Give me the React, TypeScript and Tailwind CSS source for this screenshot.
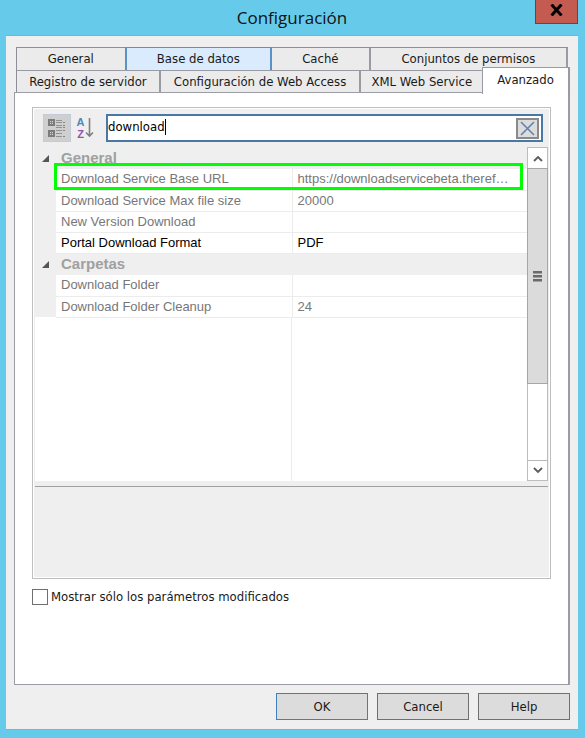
import { useState } from "react";

type Row = { name: string; value: string; editable?: boolean };
type Category = { title: string; rows: Row[] };

const categories: Category[] = [
  {
    title: "General",
    rows: [
      {
        name: "Download Service Base URL",
        value: "https://downloadservicebeta.theref…",
      },
      { name: "Download Service Max file size", value: "20000" },
      { name: "New Version Download", value: "" },
      { name: "Portal Download Format", value: "PDF", editable: true },
    ],
  },
  {
    title: "Carpetas",
    rows: [
      { name: "Download Folder", value: "" },
      { name: "Download Folder Cleanup", value: "24" },
    ],
  },
];

const tabClass =
  "h-full whitespace-nowrap border-r-2 border-[#9a9aa2] bg-[#ebebeb] text-center";

function Tabs() {
  return (
    <div
      role="tablist"
      className="ml-[2px] text-[13px] leading-5 text-[#1a1a1a]"
    >
      <div className="mr-[2px] grid h-[23px] grid-cols-[110fr_146fr_99fr_198fr] border-l border-t border-[#8e8e98]">
        <button role="tab" className={tabClass}>
          General
        </button>
        <button
          role="tab"
          className="-ml-[2px] -mt-px whitespace-nowrap border-x-2 border-t border-[#5a92c4] bg-[#d9ebfd] text-center"
        >
          Base de datos
        </button>
        <button role="tab" className={tabClass}>
          Caché
        </button>
        <button role="tab" className={tabClass}>
          Conjuntos de permisos
        </button>
      </div>
      <div className="grid h-[22px] grid-cols-[144fr_201fr_123fr_86fr] border-l border-[#8e8e98]">
        <button role="tab" className={`${tabClass} border-t`}>
          Registro de servidor
        </button>
        <button role="tab" className={`${tabClass} border-t`}>
          Configuración de Web Access
        </button>
        <button role="tab" className={`${tabClass} border-t`}>
          XML Web Service
        </button>
        <button
          role="tab"
          aria-selected="true"
          className="relative z-10 -mb-[2px] -ml-[2px] -mt-[3px] border-l border-r-2 border-t border-[#9a9aa2] bg-white pb-[2px] text-center"
        >
          Avanzado
        </button>
      </div>
    </div>
  );
}

function CategorizedIcon() {
  return (
    <svg width="18" height="19" viewBox="0 0 18 19" fill="none">
      <path d="M1 1h5v5H1zM1 12h5v5H1z" stroke="#7c7c7c" strokeWidth="2" />
      <path d="M2 3.5h3M3.5 2v3M2 14.5h3M3.5 13v3" stroke="#8a8a8a" />
      <path
        d="M8 1.5h6M8 3.5h6M8 6.5h6M8 8.5h6M8 11.5h6M8 14.5h6M8 17.5h6"
        stroke="#929292"
      />
      <path
        d="M15 3.5h2M15 6.5h2M15 8.5h2M15 11.5h2M15 17.5h2"
        stroke="#858585"
      />
    </svg>
  );
}

function SortIcon() {
  return (
    <span className="flex items-center">
      <span className="flex w-[9px] flex-col items-center font-['Liberation_Sans',sans-serif] text-[11px] font-bold leading-[12px]">
        <span className="text-[#4f86bd]">A</span>
        <span className="text-[#9450b0]">Z</span>
      </span>
      <svg width="9" height="20" viewBox="0 0 9 20" fill="none">
        <path
          d="M4.5 0v18M1 14.5L4.5 18 8 14.5"
          stroke="#808080"
          strokeWidth="1.6"
        />
      </svg>
    </span>
  );
}

function Toolbar() {
  const [query, setQuery] = useState("download");
  return (
    <div className="flex h-[38px] items-center pl-2 pr-[5px]">
      <button
        aria-label="Por categorías"
        className="flex h-7 w-7 shrink-0 items-center justify-center border border-[#c2cbd8] bg-[#cfcfcf]"
      >
        <CategorizedIcon />
      </button>
      <button
        aria-label="Alfabético"
        className="flex h-7 w-7 shrink-0 items-center justify-center"
      >
        <SortIcon />
      </button>
      <div className="ml-[7px] flex h-7 min-w-0 flex-1 items-center border-2 border-[#4a78a6] bg-white pr-[2px]">
        <div className="flex items-center pb-[2px]">
          <input
            aria-label="Buscar"
            value={query}
            onChange={(e) => setQuery(e.target.value)}
            className="field-sizing-content h-5 text-[13px] leading-5 text-black caret-transparent outline-none"
          />
          <span className="h-4 w-px bg-black" />
        </div>
        <button
          aria-label="Borrar"
          onClick={() => setQuery("")}
          className="ml-auto flex h-[21px] w-[23px] items-center justify-center border-2 border-[#8a8a8a] bg-[#dcdcdc]"
        >
          <svg width="15" height="15" viewBox="0 0 15 15" fill="none">
            <path
              d="M1 1l13 13M14 1L1 14"
              stroke="#6583ab"
              strokeWidth="1.6"
            />
          </svg>
        </button>
      </div>
    </div>
  );
}

function Scrollbar() {
  return (
    <div className="flex w-[21px] shrink-0 flex-col border border-[#bcbcbc] bg-white">
      <div className="flex h-5 items-center justify-center">
        <svg width="10" height="7" viewBox="0 0 10 7" fill="none">
          <path d="M1 6l4-4 4 4" stroke="#5c5c5c" strokeWidth="1.8" />
        </svg>
      </div>
      <div className="-mx-px flex h-[216px] items-center justify-center border border-[#a6a6a6] bg-[#dbdbdb]">
        <svg width="9" height="11" viewBox="0 0 9 11">
          <path d="M0 0h9v2.5H0zM0 4h9v2.5H0zM0 8h9v2.5H0z" fill="#6a6a6a" />
        </svg>
      </div>
      <div className="flex-1" />
      <div className="flex h-5 items-center justify-center border-t border-[#b8b8b8]">
        <svg width="10" height="7" viewBox="0 0 10 7" fill="none">
          <path d="M1 1l4 4 4-4" stroke="#5c5c5c" strokeWidth="1.8" />
        </svg>
      </div>
    </div>
  );
}

function PropertyTable() {
  return (
    <div className="relative flex h-[334px]">
      <div className="flex min-w-0 flex-1 flex-col bg-white">
        <table className="w-full table-fixed border-collapse text-left font-['Liberation_Sans',sans-serif] text-[13px] leading-5">
          <colgroup>
            <col className="w-[21px]" />
            <col className="w-[236px]" />
            <col />
          </colgroup>
          {categories.map((category) => (
            <tbody key={category.title}>
              <tr className="h-[22px] bg-[#efefef]">
                <td className="p-0">
                  <svg
                    width="7"
                    height="7"
                    viewBox="0 0 7 7"
                    className="ml-[7px]"
                  >
                    <path d="M7 0v7H0z" fill="#555" />
                  </svg>
                </td>
                <th
                  colSpan={2}
                  className="p-0 pl-[5px] text-[15px] leading-5 text-[#a0a0a0]"
                >
                  {category.title}
                </th>
              </tr>
              {category.rows.map((row) => (
                <tr
                  key={row.name}
                  className={`h-[21px] ${row.editable ? "text-black" : "text-[#777]"}`}
                >
                  <td className="bg-[#efefef] p-0" />
                  <td className="whitespace-nowrap border-b border-r border-[#ececec] p-0 pl-[5px]">
                    {row.name}
                  </td>
                  <td className="truncate border-b border-[#ececec] p-0 pl-[5px]">
                    {row.value}
                  </td>
                </tr>
              ))}
            </tbody>
          ))}
        </table>
        <div className="w-[257px] flex-1 border-r border-[#ececec]" />
      </div>
      <Scrollbar />
      <div className="pointer-events-none absolute left-[19px] right-[25px] top-4 h-[27px] border-[3px] border-[#00ff00]" />
    </div>
  );
}

function Advanced() {
  return (
    <div className="flex flex-1 flex-col border border-r-2 border-[#9c9ca4] bg-white px-[17px] pt-[14px]">
      <div className="border border-[#bebebe] bg-white p-px">
        <div className="bg-[#efefef] px-px">
          <Toolbar />
          <PropertyTable />
          <div className="mt-[5px] h-[91px] border-t border-[#a0a0a0]" />
        </div>
      </div>
      <label className="mt-[9px] flex items-center gap-[3px] text-[13px] leading-[18px] text-[#1a1a1a]">
        <input
          type="checkbox"
          className="h-4 w-4 appearance-none border border-[#707070] bg-white"
        />
        Mostrar sólo los parámetros modificados
      </label>
    </div>
  );
}

export default function App() {
  const button =
    "h-[27px] w-[92px] border bg-[#dcdcdc] text-[13px] leading-5 text-[#1a1a1a]";
  return (
    <div className="flex min-h-screen flex-col bg-[#66cbea] pb-2 pl-[6px] pr-[7px] font-['DejaVu_Sans_Condensed','DejaVu_Sans',sans-serif]">
      <header className="relative flex h-[35px] items-center justify-center">
        <h1 className="font-['Open_Sans',sans-serif] text-[17px] leading-6 text-[#111]">
          Configuración
        </h1>
        <button
          aria-label="Cerrar"
          className="absolute right-0 top-0 flex h-6 w-[43px] items-center justify-center border border-t-0 border-[#7d3b3b] bg-[#c35b51] pb-1"
        >
          <svg width="13" height="12" viewBox="0 0 13 12" fill="none">
            <path
              d="M1.5 0.5l10 11M11.5 0.5l-10 11"
              stroke="#000"
              strokeWidth="3"
            />
          </svg>
        </button>
      </header>
      <main className="flex flex-1 flex-col border-y border-[#7fb2c4] bg-[#efefef] px-2 pt-[11px]">
        <Tabs />
        <Advanced />
        <div className="flex justify-end gap-[9px] pb-[9px] pt-2">
          <button className={`${button} border-[#3f7fbd]`}>OK</button>
          <button className={`${button} border-[#707070]`}>Cancel</button>
          <button className={`${button} border-[#707070]`}>Help</button>
        </div>
      </main>
    </div>
  );
}
